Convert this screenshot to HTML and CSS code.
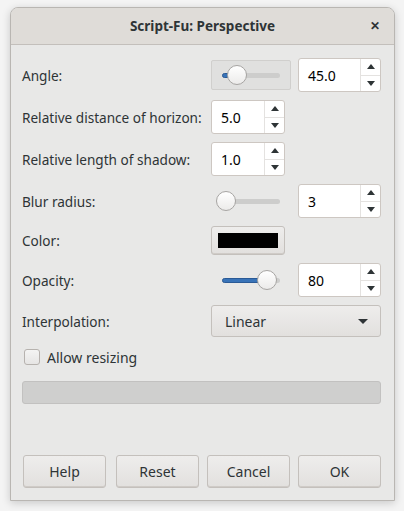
FILE: index.html
```html
<!DOCTYPE html>
<html>
<head>
<meta charset="utf-8">
<link rel="stylesheet" href="styles.css">
</head>
<body>
<div class="window">
  <div class="titlebar">
    <span class="title">Script-Fu: Perspective</span>
    <span class="close">&#x2715;</span>
  </div>
  <div class="content">
    <div class="form">
      <div class="label">Angle:</div>
      <div class="slider-frame">
        <div class="slider"><div class="trough"><div class="fill" style="width:8px"></div></div><div class="thumb" style="left:5px"></div></div>
      </div>
      <div class="spin"><div class="val">45.0</div><div class="btns"><span class="up"></span><span class="down"></span></div></div>

      <div class="label">Relative distance of horizon:</div>
      <div class="spin short"><div class="val">5.0</div><div class="btns"><span class="up"></span><span class="down"></span></div></div>

      <div class="label">Relative length of shadow:</div>
      <div class="spin short"><div class="val">1.0</div><div class="btns"><span class="up"></span><span class="down"></span></div></div>

      <div class="label">Blur radius:</div>
      <div class="slider-cell">
        <div class="slider"><div class="trough"></div><div class="thumb" style="left:-6px"></div></div>
      </div>
      <div class="spin"><div class="val">3</div><div class="btns"><span class="up"></span><span class="down"></span></div></div>

      <div class="label">Color:</div>
      <div class="color-btn"><div class="swatch"></div></div>

      <div class="label">Opacity:</div>
      <div class="slider-cell">
        <div class="slider"><div class="trough"><div class="fill" style="width:45px"></div></div><div class="thumb" style="left:35px"></div></div>
      </div>
      <div class="spin"><div class="val">80</div><div class="btns"><span class="up"></span><span class="down"></span></div></div>

      <div class="label">Interpolation:</div>
      <div class="combo"><span>Linear</span><span class="caret"></span></div>

      <div class="check-row"><span class="checkbox"></span><span class="check-label">Allow resizing</span></div>

      <div class="progress"></div>
    </div>
    <div class="actions">
      <div class="btn help">Help</div>
      <div class="btn">Reset</div>
      <div class="btn">Cancel</div>
      <div class="btn">OK</div>
    </div>
  </div>
</div>
</body>
</html>
```

FILE: styles.css
```css
* { box-sizing: border-box; }
html, body { margin: 0; padding: 0; }
body {
  width: 404px;
  height: 511px;
  background: #f4f4f4;
  font-family: "Noto Sans", "Open Sans", sans-serif;
  font-size: 13.6px;
  color: #2e3436;
  padding: 7px 9px 10px 10px;
}
.window {
  width: 385px;
  height: 494px;
  background: #e8e8e7;
  border: 1px solid #b9b6b2;
  border-radius: 8px 8px 0 0;
  box-shadow: 0 2px 8px rgba(0,0,0,0.18);
  display: flex;
  flex-direction: column;
  overflow: hidden;
}
.titlebar {
  height: 37px;
  flex: none;
  background: #dfdcd8;
  border-bottom: 1px solid #c3bfbb;
  position: relative;
  display: flex;
  align-items: center;
  justify-content: center;
  padding-bottom: 1px;
}
.title { font-weight: bold; font-size: 13.5px; color: #2e3436; }
.close {
  position: absolute;
  right: 14px;
  top: 9px;
  font-size: 12px;
  font-weight: bold;
  color: #2e3436;
}
.content {
  flex: 1;
  display: flex;
  flex-direction: column;
  justify-content: space-between;
  padding: 13px 13px 12px 11px;
}
.form {
  display: grid;
  grid-template-columns: 182px 80px 83px;
  column-gap: 7px;
  row-gap: 8px;
  align-items: center;
}
.label { display: flex; align-items: center; white-space: nowrap; }
.spin {
  height: 34px;
  background: #fff;
  border: 1px solid #cdc7c2;
  border-radius: 3px;
  display: flex;
}
.spin.short { grid-column: 2 / 4; width: 74px; }
.spin .val { flex: 1; display: flex; align-items: center; padding-left: 9px; color: #000; font-size: 14px; }
.spin .btns {
  width: 20px;
  border-left: 1px solid #e4e2e0;
  display: flex;
  flex-direction: column;
}
.spin .btns span {
  flex: 1;
  display: flex;
  align-items: center;
  justify-content: center;
}
.spin .btns .up { border-bottom: 1px solid #e4e2e0; }
.spin .btns .up::after {
  content: "";
  border-left: 4px solid transparent;
  border-right: 4px solid transparent;
  border-bottom: 5px solid #2e3436;
}
.spin .btns .down::after {
  content: "";
  border-left: 4px solid transparent;
  border-right: 4px solid transparent;
  border-top: 5px solid #2e3436;
}
.slider-frame {
  height: 30px;
  background: #e0e0df;
  border: 1px solid #d0cfcd;
  border-radius: 2px;
  display: flex;
  align-items: center;
  padding-left: 10px;
}
.slider-cell { height: 34px; display: flex; align-items: center; padding-left: 11px; }
.slider { position: relative; width: 58px; height: 20px; display: flex; align-items: center; }
.trough {
  width: 58px;
  height: 5px;
  background: #cdcdcc;
  border-radius: 3px;
  position: relative;
}
.fill {
  position: absolute;
  left: 0; top: 0; bottom: 0;
  background: #3873b8;
  border: 1px solid #2a5a96;
  border-radius: 3px;
}
.thumb {
  position: absolute;
  top: 0;
  width: 20px;
  height: 20px;
  border-radius: 50%;
  background: linear-gradient(#ffffff, #ecebea);
  border: 1px solid #a7a5a3;
}
.color-btn {
  grid-column: 2 / 4;
  width: 74px;
  height: 29px;
  border: 1px solid #c4c0bc;
  border-radius: 3px;
  background: linear-gradient(#eeedec, #e2e0de);
  box-shadow: inset 0 -1px 0 #cfcbc7;
  display: flex;
  align-items: center;
  justify-content: center;
}
.swatch { width: 60px; height: 15px; background: #000; }
.combo {
  grid-column: 2 / 4;
  height: 32px;
  border: 1px solid #c4c0bc;
  border-radius: 3px;
  background: linear-gradient(#eeedec, #e2e0de);
  display: flex;
  align-items: center;
  justify-content: space-between;
  padding: 0 12px 0 13px;
  font-size: 14px;
}
.caret {
  border-left: 5px solid transparent;
  border-right: 5px solid transparent;
  border-top: 5px solid #2e3436;
}
.check-row {
  grid-column: 1 / 4;
  height: 24px;
  display: flex;
  align-items: center;
  padding-left: 2px;
}
.checkbox {
  width: 16px;
  height: 16px;
  border: 1px solid #b6b2ae;
  border-radius: 3px;
  background: linear-gradient(#f4f4f3, #e6e5e4);
  margin-right: 7px;
}
.check-label { font-size: 14px; }
.progress {
  grid-column: 1 / 4;
  height: 23px;
  margin-top: 4px;
  background: #cfcfce;
  border: 1px solid #c2c1c0;
  border-radius: 3px;
}
.actions {
  display: flex;
  gap: 8px;
  padding-left: 1px;
}
.btn {
  width: 83px;
  height: 33px;
  border: 1px solid #c4c0bc;
  border-radius: 3px;
  background: linear-gradient(#eeedec, #e2e0de);
  box-shadow: inset 0 -1px 0 #cfcbc7;
  display: flex;
  align-items: center;
  justify-content: center;
  font-size: 14px;
}
.btn.help { margin-right: 2px; }
```
